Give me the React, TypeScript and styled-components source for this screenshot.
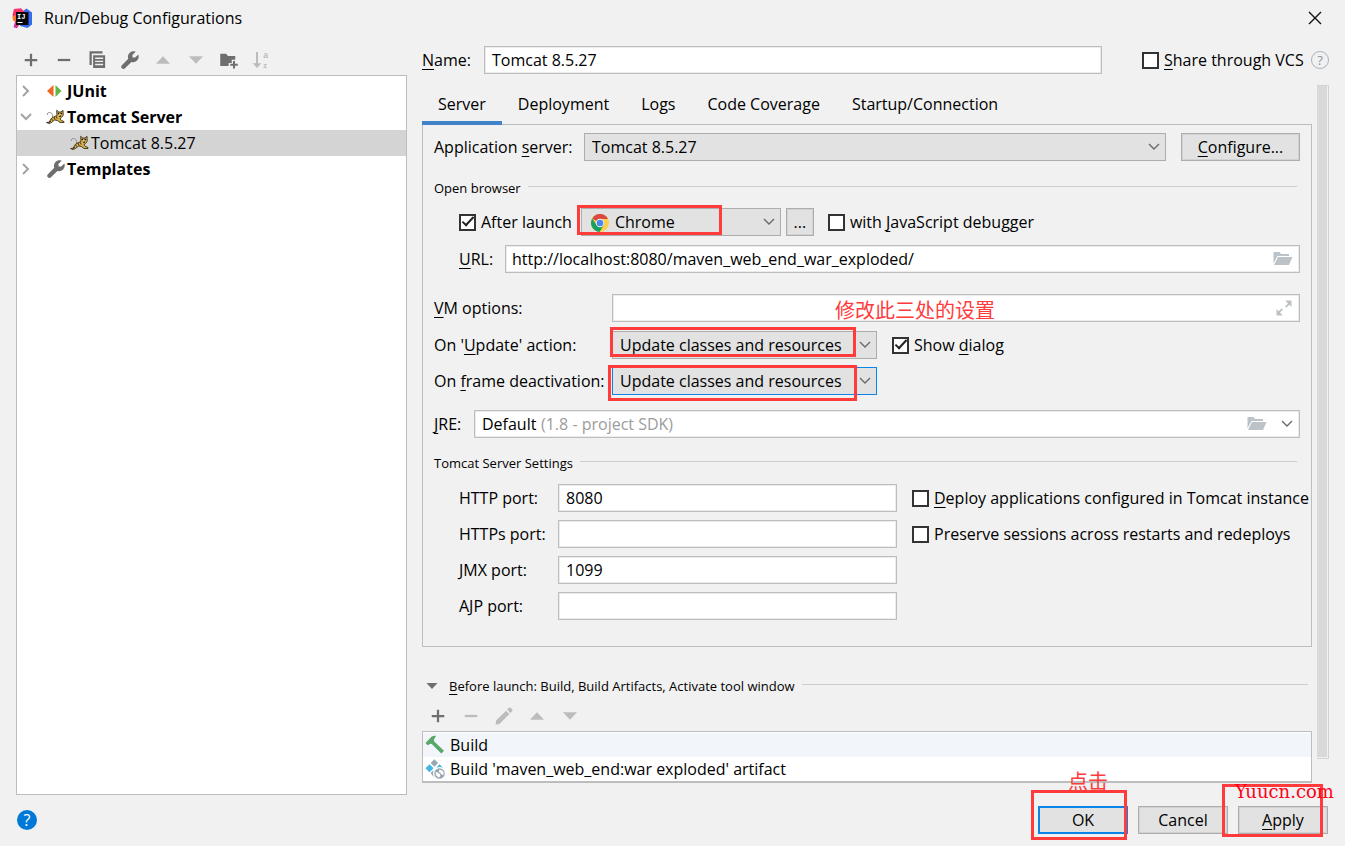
import React from 'react';
import styled, { createGlobalStyle, css } from 'styled-components';

const sans = '"Open Sans", "Noto Sans", "Noto Sans CJK SC", sans-serif';
const marker = '#ff3b3b';
const line = '#bdbdbd';

const GlobalStyle = createGlobalStyle`
  *, *::before, *::after { box-sizing: border-box; }
  body { margin: 0; background: #f1f1f1; color: #000; font: 16px/20px ${sans}; }
  button, input, select { font: inherit; color: inherit; margin: 0; border-radius: 0; }
  u { text-decoration-thickness: 1px; text-underline-offset: 3px; text-decoration-skip-ink: none; }
  svg { display: block; flex: none; }
`;

/* ---------- layout ---------- */

const Dialog = styled.div`
  display: flex;
  flex-direction: column;
  min-height: 100vh;
  overflow: hidden;
`;

const TitleBar = styled.header`
  display: flex;
  align-items: center;
  height: 36px;
  padding: 0 23px 0 12px;
`;

const Title = styled.h1`
  flex: 1;
  margin: 0 0 0 11px;
  font-size: 16px;
  font-weight: 400;
`;

const Body = styled.div`
  display: flex;
  flex: 1;
`;

const Sidebar = styled.aside`
  display: flex;
  flex-direction: column;
  flex: 0 0 391px;
  margin: 9px 15px 0 16px;
`;

const Main = styled.main`
  flex: 1;
  min-width: 0;
  padding: 10px 16px 12px 0;
`;

const Toolbar = styled.div<{ $top?: number; $start: number }>`
  display: flex;
  align-items: center;
  gap: 5px;
  height: 30px;
  margin-top: ${(p) => p.$top ?? 0}px;
  padding-left: ${(p) => p.$start}px;
`;

const IconButton = styled.button`
  display: grid;
  place-items: center;
  width: 28px;
  height: 28px;
  padding: 0;
  border: 0;
  background: none;
  color: #6e6e6e;
  &:disabled { color: #bcbcbc; }
`;

const PlainButton = styled.button`
  display: grid;
  place-items: center;
  padding: 0;
  border: 0;
  background: none;
  color: #6a6a6a;
`;

const FoldButton = styled(PlainButton)`
  width: 20px;
  height: 20px;
`;

/* ---------- tree ---------- */

const Tree = styled.ul`
  flex: 1;
  margin: 0;
  padding: 2px 0;
  border: 1px solid ${line};
  background: #fff;
  list-style: none;
`;

const TreeRow = styled.li<{ $selected?: boolean; $child?: boolean }>`
  display: flex;
  align-items: center;
  height: 26px;
  padding-left: ${(p) => (p.$child ? 53 : 3)}px;
  background: ${(p) => (p.$selected ? '#d4d4d4' : 'transparent')};
  font-weight: ${(p) => (p.$child ? 400 : 700)};
`;

const TreeArrow = styled.span`
  width: 26px;
  color: #a3a3a3;
`;

const TreeIcon = styled.span`
  width: 20px;
  margin-right: 1px;
  color: #6e6e6e;
`;

/* ---------- form parts ---------- */

const Row = styled.div<{ $top?: number; $indent?: boolean }>`
  display: flex;
  align-items: center;
  height: 28px;
  margin-top: ${(p) => p.$top ?? 0}px;
  padding-left: ${(p) => (p.$indent ? 25 : 0)}px;
`;

const Label = styled.label<{ $width: number }>`
  flex: 0 0 ${(p) => p.$width}px;
  white-space: nowrap;
`;

const fieldBox = css`
  height: 28px;
  border: 1px solid ${line};
  background: #fff;
  box-shadow: inset 0 0 0 1px #ececec;
`;

const TextInput = styled.input`
  ${fieldBox}
  flex: 1;
  width: 100%;
  min-width: 0;
  padding: 0 7px;
  outline: none;
`;

const FieldFrame = styled.div`
  ${fieldBox}
  display: flex;
  align-items: center;
  flex: 1;
  min-width: 0;
  padding-right: 6px;
`;

const BareInput = styled.input`
  flex: 1;
  min-width: 0;
  height: 100%;
  padding: 0 6px;
  border: 0;
  background: none;
  outline: none;
`;

const BareSelect = styled.select`
  appearance: none;
  padding: 0 4px 0 7px;
  border: 0;
  background: none;
  outline: none;
`;

const Hint = styled.span`
  flex: 1;
  color: #9c9c9c;
  white-space: nowrap;
`;

const SelectWrap = styled.div<{ $width?: number }>`
  position: relative;
  flex: ${(p) => (p.$width ? `0 0 ${p.$width}px` : '1')};
  min-width: 0;
  height: 28px;
`;

const Select = styled.select<{ $focused?: boolean; $withIcon?: boolean }>`
  appearance: none;
  display: block;
  width: 100%;
  height: 28px;
  padding: 0 28px 0 ${(p) => (p.$withIcon ? 33 : 7)}px;
  border: 1px solid ${(p) => (p.$focused ? '#0a84e8' : '#adadad')};
  background: #e2e2e2;
  outline: none;
`;

const SelectArrow = styled.span`
  position: absolute;
  top: 8px;
  right: 6px;
  color: #6a6a6a;
  pointer-events: none;
`;

const SelectIcon = styled.span`
  position: absolute;
  top: 6px;
  left: 10px;
  pointer-events: none;
`;

const Button = styled.button<{ $width: number; $primary?: boolean }>`
  flex: 0 0 ${(p) => p.$width}px;
  width: ${(p) => p.$width}px;
  height: 28px;
  padding: 0;
  border: ${(p) => (p.$primary ? '2px solid #0a84e8' : '1px solid #adadad')};
  background: #e2e2e2;
  box-shadow: ${(p) => (p.$primary ? 'none' : 'inset 0 0 0 1px #d2d2d2')};
`;

const CheckLabel = styled.label<{ $width?: number }>`
  display: flex;
  align-items: center;
  gap: 5px;
  width: ${(p) => (p.$width ? `${p.$width}px` : 'auto')};
  flex: none;
  white-space: nowrap;
`;

const CheckInput = styled.input`
  appearance: none;
  display: grid;
  place-items: center;
  flex: none;
  width: 17px;
  height: 17px;
  border: 2px solid #333;
  background: #fff;
  &:checked::after {
    content: '';
    width: 12px;
    height: 6px;
    margin-bottom: 4px;
    border: solid #222;
    border-width: 0 0 2px 2px;
    transform: rotate(-47deg);
  }
`;

const Gap = styled.span<{ $size: number }>`
  flex: 0 0 ${(p) => p.$size}px;
`;

const SectionTitle = styled.h2<{ $top: number; $inset?: number }>`
  display: flex;
  align-items: center;
  gap: 7px;
  height: 20px;
  margin: ${(p) => p.$top}px ${(p) => p.$inset ?? 3}px 0 0;
  font-size: 13px;
  font-weight: 400;
  white-space: nowrap;
  &::after {
    content: '';
    flex: 1;
    height: 1px;
    margin-bottom: 3px;
    background: #cdcdcd;
  }
`;

/* ---------- tabs, panel ---------- */

const ScrollArea = styled.div`
  display: flex;
  margin-top: 11px;
`;

const Content = styled.div`
  flex: 1;
  min-width: 0;
`;

const ScrollThumb = styled.div`
  width: 12px;
  margin: 0 0 24px 5px;
  border: 1px solid #d2d2d2;
  border-width: 1px 1px 1px 0;
  background: #d9d9d9;
  box-shadow: inset -1px -1px 0 #f1f1f1;
`;

const Tabs = styled.div`
  display: flex;
  height: 39px;
`;

const Tab = styled.button<{ $active?: boolean }>`
  position: relative;
  z-index: 1;
  height: 40px;
  padding: 2px 16px 0;
  border: 0;
  border-bottom: 4px solid ${(p) => (p.$active ? '#4083c9' : 'transparent')};
  background: none;
`;

const Panel = styled.section`
  padding: 8px 11px 26px;
  border: 1px solid ${line};
`;

const PortGrid = styled.div`
  display: grid;
  grid-template-columns: 99px minmax(0, 1fr) 388px;
  row-gap: 8px;
  align-items: center;
  margin-top: 11px;
  padding-left: 25px;
`;

const PortField = styled.div`
  display: flex;
  padding-right: 15px;
`;

const TaskList = styled.ul`
  margin: 0;
  padding: 1px 0 0;
  border: 1px solid ${line};
  border-bottom-width: 2px;
  background: #fff;
  list-style: none;
`;

const TaskRow = styled.li<{ $highlighted?: boolean }>`
  display: flex;
  align-items: center;
  gap: 5px;
  height: 24px;
  padding-left: 2px;
  background: ${(p) => (p.$highlighted ? '#f2f5fa' : 'transparent')};
`;

const Footer = styled.footer`
  display: flex;
  align-items: center;
  gap: 10px;
  padding: 11px 17px 12px;
`;

const HelpBadge = styled.button<{ $filled?: boolean }>`
  display: grid;
  place-items: center;
  flex: none;
  width: ${(p) => (p.$filled ? 20 : 18)}px;
  height: ${(p) => (p.$filled ? 20 : 18)}px;
  padding: 0;
  border: ${(p) => (p.$filled ? '0' : '1px solid #a9b3b9')};
  border-radius: 50%;
  background: ${(p) => (p.$filled ? '#0078d7' : 'transparent')};
  color: ${(p) => (p.$filled ? '#fff' : '#8b959b')};
  font-size: ${(p) => (p.$filled ? 16 : 13)}px;
  line-height: 16px;
`;

const Spacer = styled.span`
  flex: 1;
`;

/* ---------- red notes over the dialog ---------- */

const Anchor = styled.span`
  position: relative;
  display: flex;
`;

const MarkBox = styled.span<{ $x: number; $y: number; $w: number; $h: number }>`
  position: absolute;
  z-index: 2;
  left: ${(p) => p.$x}px;
  top: ${(p) => p.$y}px;
  width: ${(p) => p.$w}px;
  height: ${(p) => p.$h}px;
  border: 3px solid ${marker};
  pointer-events: none;
`;

const Note = styled.span<{ $x: number; $y: number }>`
  position: absolute;
  left: ${(p) => p.$x}px;
  top: ${(p) => p.$y}px;
  color: ${marker};
  font: 400 20px/24px "Noto Sans CJK SC", sans-serif;
  white-space: nowrap;
  pointer-events: none;
`;

const Watermark = styled(Note)`
  z-index: 3;
  color: #ff0018;
  font: 18px/20px "DejaVu Serif", serif;
`;

/* ---------- icons ---------- */

const Svg = ({ size = 20, children }: { size?: number; children: React.ReactNode }) => (
  <svg width={size} height={size} viewBox="0 0 16 16" fill="currentColor" aria-hidden="true">
    {children}
  </svg>
);

const AddIcon = () => <Svg><path d="M7.1 3h1.8v4.1H13v1.8H8.9V13H7.1V8.9H3V7.1h4.1z" /></Svg>;
const RemoveIcon = () => <Svg><path d="M3 7.1h10v1.8H3z" /></Svg>;
const CopyIcon = () => (
  <Svg>
    <path d="M2 1h10.4v1.8H3.8V12H2z" />
    <path fillRule="evenodd" d="M4.9 4.1h9.6v10.2H4.9zM6.5 6v1.1h6.4V6zm0 2.5v1.1h6.4V8.5zm0 2.5v1.1h6.4V11z" />
  </Svg>
);
const WrenchIcon = () => (
  <Svg>
    <path d="M14.7 3.6 12.1 6l-2-.1L9.9 4l2.6-2.6C10.7.7 8.9 1.1 7.6 2.4 6.4 3.6 6 5.4 6.6 7L1.5 12.1c-.7.7-.7 1.8 0 2.5s1.800.7 2.5 0L9.1 9.5c1.5.5 3.3.1 4.5-1.1 1.3-1.3 1.7-3.2 1.1-4.8z" />
  </Svg>
);
const UpIcon = () => <Svg><path d="M2.4 11h11.2L8 5z" /></Svg>;
const DownIcon = () => <Svg><path d="M2.4 5h11.2L8 11z" /></Svg>;
const FolderAddIcon = () => (
  <Svg>
    <path d="M1 2.9h4.6L7.2 4.7H13v3.1h-2.8v2.5H7.7v2.5H1z" />
    <path d="M11.2 8.8h1.6v2.1H15v1.6h-2.2v2.2h-1.6v-2.2H9v-1.6h2.2z" />
  </Svg>
);
const SortIcon = () => (
  <Svg>
    <path d="M3.2 1.6h1.6v9h2.7L4 14.3.5 10.600h2.7z" />
    <text x="9" y="6.7" fontSize="7" fontWeight="700" fontFamily="Liberation Sans, sans-serif">a</text>
    <text x="9" y="14.2" fontSize="6" fontWeight="700" fontFamily="Liberation Sans, sans-serif">z</text>
  </Svg>
);
const PencilIcon = () => (
  <Svg>
    <path d="m9.600 3.700 2.700 2.700-7.900 7.900-3.100.4.400-3.100zM10.500 2.800l1.200-1.200c.6-.6 1.300-.6 1.800-.1l1 1c.5.5.5 1.200-.1 1.800l-1.200 1.200z" />
  </Svg>
);
const ChevronIcon = ({ dir, weight = 1.4 }: { dir: 'right' | 'down'; weight?: number }) => (
  <svg width="12" height="12" viewBox="0 0 12 12" fill="none" stroke="currentColor" strokeWidth={weight} aria-hidden="true">
    <path d={dir === 'right' ? 'M3 1l5 5-5 5' : 'M1 3l5 5 5-5'} />
  </svg>
);
const FoldIcon = () => (
  <svg width="12" height="8" viewBox="0 0 12 8" fill="#6e6e6e" aria-hidden="true"><path d="M.5 1h11L6 7z" /></svg>
);
const JUnitIcon = () => (
  <svg width="20" height="20" viewBox="0 0 20 20" aria-hidden="true">
    <path d="M7.500 4v12L1 10z" fill="#f26522" />
    <path d="M9.500 4v12l6-6z" fill="#62b543" />
  </svg>
);
const TomcatIcon = () => (
  <svg width="20" height="18" viewBox="0 0 20 18" fill="none" aria-hidden="true">
    <path d="M6.500 9C7 5.500 5 4.500 3.500 4.500S1 5.500 1.300 7" stroke="#8c8c8c" />
    <path d="m.5 14.500 2.500-.3 2.500-4L9 8.300l2-.8-.3-5.200 2 1.700h2.300l2-1.700.2 5-1.700 2.200-1.500 1.300 1.500 1.700 2.500 1v1h-4l-2.500-2-3-.5-3 2.500-2.500 1z" fill="#d9ae45" stroke="#35301f" strokeWidth=".9" />
    <path d="M11.800 5.500h1.400m1.400 0h1.400M13 8h2" stroke="#111" strokeWidth="1.300" />
    <path d="m5.500 10.500 1 2M8 9l1 2.500M10.500 8.500l.5 2M3 14.500l2-1.500" stroke="#3f381f" />
    <path d="M12.500 6.500h2.500L13.800 8z" fill="#fff1b5" />
  </svg>
);
const LogoIcon = () => (
  <svg width="21" height="21" viewBox="0 0 21 21" aria-hidden="true">
    <defs>
      <linearGradient id="logoWarm" x1="0" y1="1" x2="1" y2="0">
        <stop offset="0" stopColor="#9a3bd6" />
        <stop offset=".35" stopColor="#fb2c68" />
        <stop offset="1" stopColor="#fb3770" />
      </linearGradient>
      <linearGradient id="logoCool" x1="0" y1="0" x2="1" y2="1">
        <stop offset="0" stopColor="#4d6bea" />
        <stop offset="1" stopColor="#286cf0" />
      </linearGradient>
    </defs>
    <path d="M11 3 14.500.5 20 4.500v12L15.500 20 8 18z" fill="url(#logoCool)" />
    <path d="M2 1 9 .3l4 4-3 8-5 8-3.500-1L3 14 .5 7z" fill="url(#logoWarm)" />
    <path d="M.3 8.500 3.800 7v6.500L1 12.500z" fill="#fc7b26" />
    <path d="M4 4h12.500v13H4z" fill="#07060a" />
    <text x="5" y="10.500" fill="#fff" fontSize="7" fontWeight="700" fontFamily="Liberation Mono, monospace">IJ</text>
    <path d="M5.500 14h5v1h-5z" fill="#fff" />
  </svg>
);
const CloseIcon = () => (
  <svg width="14" height="14" viewBox="0 0 14 14" stroke="#111" strokeWidth="1.4" aria-hidden="true"><path d="m1 1 12 12M13 1 1 13" /></svg>
);
const ChromeIcon = () => (
  <svg width="18" height="18" viewBox="0 0 18 18" aria-hidden="true">
    <circle cx="9" cy="9" r="9" fill="#fcd04b" />
    <path d="M9 9 1.200 4.500A9 9 0 0 1 16.800 4.500L16.900 5H9z" fill="#db4a3e" />
    <path d="M1.200 4.500A9 9 0 0 0 8.500 18l4-6.500L9 9 5.500 11z" fill="#1a9f5c" />
    <circle cx="9" cy="9" r="4.200" fill="#f3f3f3" />
    <circle cx="9" cy="9" r="3.300" fill="#4a88f0" />
  </svg>
);
const OpenFolderIcon = () => (
  <svg width="20" height="16" viewBox="0 0 20 16" fill="#bcc3c8" aria-hidden="true">
    <path d="M.5 1h6l1.500 2h8v2H4.500L.5 12.500z" />
    <path d="M5 6h14.500L16 14H1z" />
  </svg>
);
const ExpandIcon = () => (
  <svg width="18" height="18" viewBox="0 0 18 18" fill="#bcc3c8" aria-hidden="true">
    <path d="M10 1.500h6.500V8l-2.200-2.200-3 3L10 7.500l3-3z" />
    <path d="M8 16.500H1.500V10l2.200 2.200 3-3L8 10.500l-3 3z" />
  </svg>
);
const HammerIcon = () => (
  <Svg>
    <path fill="#59a869" d="M.4 6.300 5.200 1.400c1-.8 2.300-.9 3.700-.9L7 3.800l.4 1.400 7.800 7.300-2.200 2.300L5.400 7.100l-1-.2L2.200 8.100z" />
  </Svg>
);
const ArtifactIcon = () => (
  <Svg>
    <path fill="#9aa7b0" d="m7.500.2 3 3-3 3-3-3z" />
    <path fill="#40b6e0" d="m3.600 4.200 3.200 3.200-3.200 3.200L.4 7.400zM11.600 4.200l2.700 2.700c-1.900-.8-3.900-.5-5.300.1z" />
    <path fill="#9aa7b0" d="m6.700 8.800-2.200 2.400 2.700 3.500c-.9-2-1-4-.5-5.900z" />
    <path fillRule="evenodd" fill="#9aa7b0" d="M11.600 7.400a4.200 4.200 0 1 0 0 8.400 4.200 4.200 0 0 0 0-8.400zm-3 3.100c1.500-.2 1.700 1 2.900 1.200 1 .3 1 1.300.1 2.900-2-.2-3.400-2-3-4.100zm3.300-2c2 .2 3 1.600 3 3.200-.2 1.400-1.300 1.300-1.700.4-.5-1.100-1.900-.6-2-2-.1-.8.300-1.300.7-1.600z" />
  </Svg>
);

/* ---------- small composites ---------- */

const Check = ({ children, checked, width }: { children: React.ReactNode; checked?: boolean; width?: number }) => (
  <CheckLabel $width={width}>
    <CheckInput type="checkbox" defaultChecked={checked} />
    <span>{children}</span>
  </CheckLabel>
);

type ComboProps = {
  id?: string;
  value: string;
  width?: number;
  focused?: boolean;
  icon?: React.ReactNode;
  label?: string;
  children?: React.ReactNode;
};

const Combo = ({ id, value, width, focused, icon, label, children }: ComboProps) => (
  <SelectWrap $width={width}>
    <Select id={id} aria-label={label} $focused={focused} $withIcon={!!icon}>
      <option>{value}</option>
    </Select>
    {icon && <SelectIcon>{icon}</SelectIcon>}
    <SelectArrow><ChevronIcon dir="down" /></SelectArrow>
    {children}
  </SelectWrap>
);

const tabs = ['Server', 'Deployment', 'Logs', 'Code Coverage', 'Startup/Connection'];

const ports = [
  { id: 'http', label: 'HTTP port:', value: '8080', option: <><u>D</u>eploy applications configured in Tomcat instance</> },
  { id: 'https', label: 'HTTPs port:', value: '', option: <>Preserve sessions across restarts and redeploys</> },
  { id: 'jmx', label: 'JMX port:', value: '1099', option: null },
  { id: 'ajp', label: 'AJP port:', value: '', option: null },
];

export default function App() {
  return (
    <>
      <GlobalStyle />
      <Dialog>
        <TitleBar>
          <LogoIcon />
          <Title>Run/Debug Configurations</Title>
          <PlainButton aria-label="Close"><CloseIcon /></PlainButton>
        </TitleBar>

        <Body>
          <Sidebar>
            <Toolbar $start={1}>
              <IconButton aria-label="Add"><AddIcon /></IconButton>
              <IconButton aria-label="Remove"><RemoveIcon /></IconButton>
              <IconButton aria-label="Copy"><CopyIcon /></IconButton>
              <IconButton aria-label="Edit templates"><WrenchIcon /></IconButton>
              <IconButton aria-label="Move up" disabled><UpIcon /></IconButton>
              <IconButton aria-label="Move down" disabled><DownIcon /></IconButton>
              <IconButton aria-label="New folder"><FolderAddIcon /></IconButton>
              <IconButton aria-label="Sort" disabled><SortIcon /></IconButton>
            </Toolbar>
            <Tree>
              <TreeRow>
                <TreeArrow><ChevronIcon dir="right" weight={2} /></TreeArrow>
                <TreeIcon><JUnitIcon /></TreeIcon>
                JUnit
              </TreeRow>
              <TreeRow>
                <TreeArrow><ChevronIcon dir="down" weight={2} /></TreeArrow>
                <TreeIcon><TomcatIcon /></TreeIcon>
                Tomcat Server
              </TreeRow>
              <TreeRow $selected $child>
                <TreeIcon><TomcatIcon /></TreeIcon>
                Tomcat 8.5.27
              </TreeRow>
              <TreeRow>
                <TreeArrow><ChevronIcon dir="right" weight={2} /></TreeArrow>
                <TreeIcon><WrenchIcon /></TreeIcon>
                Templates
              </TreeRow>
            </Tree>
          </Sidebar>

          <Main>
            <Row>
              <Label $width={62} htmlFor="name"><u>N</u>ame:</Label>
              <TextInput id="name" defaultValue="Tomcat 8.5.27" />
              <Gap $size={40} />
              <Check width={169}><u>S</u>hare through VCS</Check>
              <HelpBadge aria-label="About sharing">?</HelpBadge>
            </Row>

            <ScrollArea>
              <Content>
                <Tabs role="tablist">
                  {tabs.map((name, i) => (
                    <Tab key={name} role="tab" aria-selected={i === 0} $active={i === 0}>{name}</Tab>
                  ))}
                </Tabs>

                <Panel>
                  <Row>
                    <Label $width={150} htmlFor="server">Application <u>s</u>erver:</Label>
                    <Combo id="server" value="Tomcat 8.5.27" />
                    <Gap $size={15} />
                    <Button $width={119}><u>C</u>onfigure...</Button>
                  </Row>

                  <SectionTitle $top={17}>Open browser</SectionTitle>
                  <Row $top={10} $indent>
                    <Check checked>After launch</Check>
                    <Gap $size={9} />
                    <Combo label="Browser" value="Chrome" width={200} icon={<ChromeIcon />}>
                      <MarkBox $x={-4} $y={-3} $w={145} $h={30} />
                    </Combo>
                    <Gap $size={5} />
                    <Button $width={28}>...</Button>
                    <Gap $size={14} />
                    <Check>with <u>J</u>avaScript debugger</Check>
                  </Row>
                  <Row $top={9} $indent>
                    <Label $width={46} htmlFor="url"><u>U</u>RL:</Label>
                    <FieldFrame>
                      <BareInput id="url" defaultValue="http://localhost:8080/maven_web_end_war_exploded/" />
                      <PlainButton aria-label="Browse"><OpenFolderIcon /></PlainButton>
                    </FieldFrame>
                  </Row>

                  <Row $top={21}>
                    <Label $width={178} htmlFor="vm"><u>V</u>M options:</Label>
                    <SelectWrap>
                      <FieldFrame>
                        <BareInput id="vm" />
                        <PlainButton aria-label="Expand"><ExpandIcon /></PlainButton>
                      </FieldFrame>
                      <Note $x={223} $y={4}>修改此三处的设置</Note>
                    </SelectWrap>
                  </Row>
                  <Row $top={9}>
                    <Label $width={178} htmlFor="update">On '<u>U</u>pdate' action:</Label>
                    <Combo id="update" value="Update classes and resources" width={265}>
                      <MarkBox $x={-2} $y={-4} $w={246} $h={30} />
                    </Combo>
                    <Gap $size={15} />
                    <Check checked>Show <u>d</u>ialog</Check>
                  </Row>
                  <Row $top={8}>
                    <Label $width={178} htmlFor="frame">On <u>f</u>rame deactivation:</Label>
                    <Combo id="frame" value="Update classes and resources" width={265} focused>
                      <MarkBox $x={-4} $y={-2} $w={249} $h={36} />
                    </Combo>
                  </Row>
                  <Row $top={15}>
                    <Label $width={40} htmlFor="jre"><u>J</u>RE:</Label>
                    <FieldFrame>
                      <BareSelect id="jre"><option>Default</option></BareSelect>
                      <Hint>(1.8 - project SDK)</Hint>
                      <PlainButton aria-label="Browse"><OpenFolderIcon /></PlainButton>
                      <Gap $size={14} />
                      <PlainButton aria-label="Show JREs"><ChevronIcon dir="down" /></PlainButton>
                    </FieldFrame>
                  </Row>

                  <SectionTitle $top={15}>Tomcat Server Settings</SectionTitle>
                  <PortGrid>
                    {ports.map((p) => (
                      <React.Fragment key={p.id}>
                        <label htmlFor={p.id}>{p.label}</label>
                        <PortField><TextInput id={p.id} defaultValue={p.value} /></PortField>
                        <div>{p.option && <Check>{p.option}</Check>}</div>
                      </React.Fragment>
                    ))}
                  </PortGrid>
                </Panel>

                <SectionTitle $top={29} $inset={4}>
                  <FoldButton aria-label="Collapse"><FoldIcon /></FoldButton>
                  <span><u>B</u>efore launch: Build, Build Artifacts, Activate tool window</span>
                </SectionTitle>
                <Toolbar $start={2} $top={5}>
                  <IconButton aria-label="Add task"><AddIcon /></IconButton>
                  <IconButton aria-label="Remove task" disabled><RemoveIcon /></IconButton>
                  <IconButton aria-label="Edit task" disabled><PencilIcon /></IconButton>
                  <IconButton aria-label="Task up" disabled><UpIcon /></IconButton>
                  <IconButton aria-label="Task down" disabled><DownIcon /></IconButton>
                </Toolbar>
                <TaskList>
                  <TaskRow $highlighted><HammerIcon />Build</TaskRow>
                  <TaskRow><ArtifactIcon />Build 'maven_web_end:war exploded' artifact</TaskRow>
                </TaskList>
              </Content>
              <ScrollThumb />
            </ScrollArea>
          </Main>
        </Body>

        <Footer>
          <HelpBadge $filled aria-label="Help">?</HelpBadge>
          <Spacer />
          <Anchor>
            <Button $width={90} $primary>OK</Button>
            <Note $x={30} $y={-37}>点击</Note>
            <MarkBox $x={-7} $y={-16} $w={96} $h={50} />
          </Anchor>
          <Button $width={90}>Cancel</Button>
          <Anchor>
            <Button $width={90}><u>A</u>pply</Button>
            <MarkBox $x={-16} $y={-22} $w={101} $h={53} />
            <Watermark $x={-3} $y={-24}>Yuucn.com</Watermark>
          </Anchor>
        </Footer>
      </Dialog>
    </>
  );
}
